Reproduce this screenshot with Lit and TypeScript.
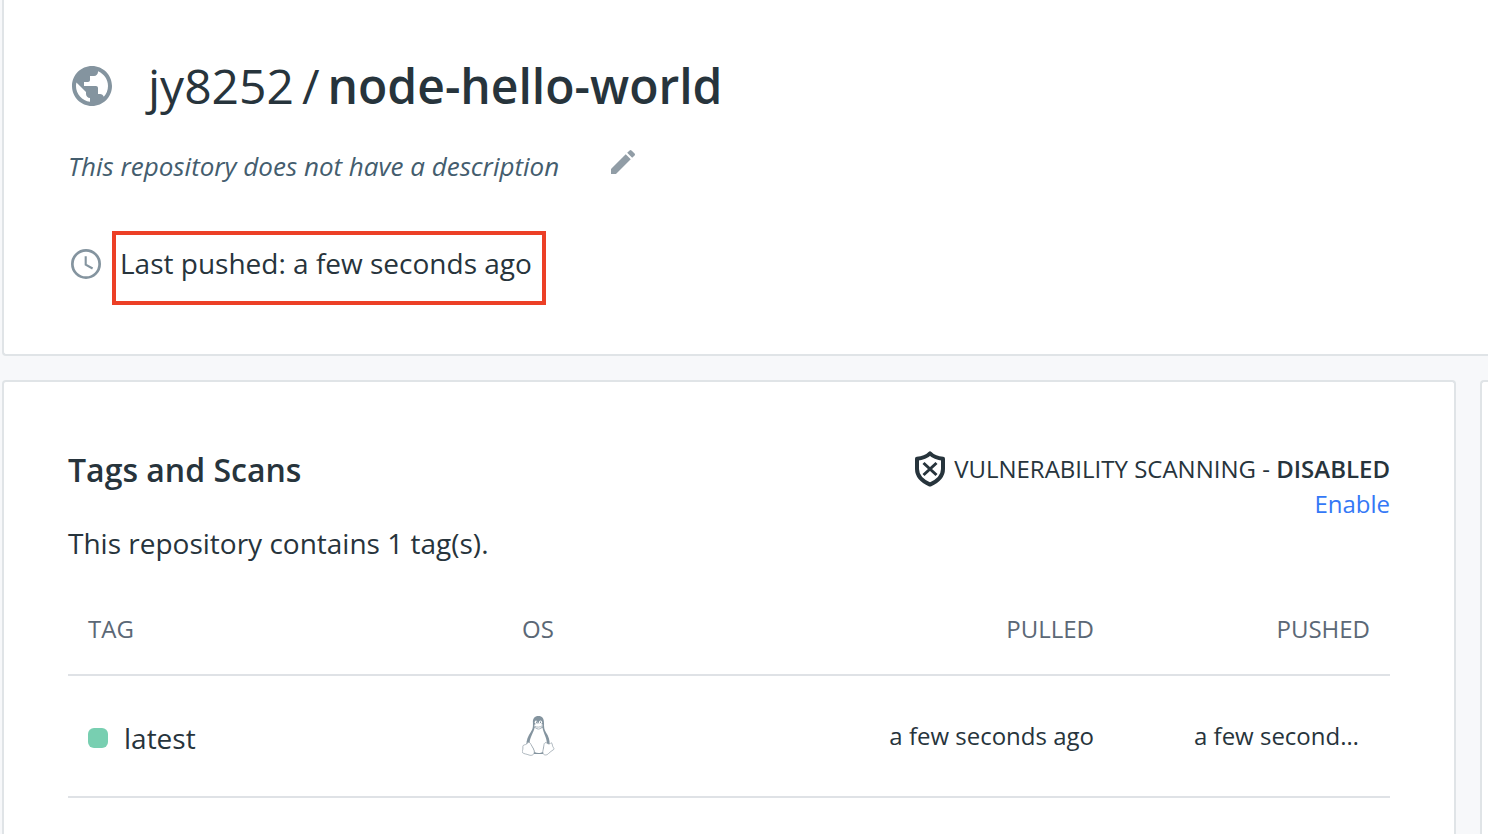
import { LitElement, html, css, svg } from "lit";
import { customElement } from "lit/decorators.js";

interface TagRow {
  name: string;
  pulled: string;
  pushed: string;
}

const rows: TagRow[] = [
  { name: "latest", pulled: "a few seconds ago", pushed: "a few seconds ago" },
];

const globe = svg`<path fill="currentColor" d="M12 2C6.480 2 2 6.480 2 12s4.480 10 10 10 10-4.480 10-10S17.520 2 12 2zm-1 17.930c-3.950-.49-7-3.850-7-7.930 0-.62.08-1.210.21-1.790L9 15v1c0 1.100.9 2 2 2v1.930zm6.900-2.540c-.26-.81-1-1.390-1.900-1.390h-1v-3c0-.55-.45-1-1-1H8v-2h2c.55 0 1-.45 1-1V7h2c1.100 0 2-.9 2-2v-.41c2.930 1.190 5 4.060 5 7.410 0 2.080-.8 3.970-2.100 5.390z"/>`;

const pencil = svg`<path fill="currentColor" d="M3 17.250V21h3.750L17.810 9.940l-3.750-3.750L3 17.250zM20.710 7.040a1 1 0 0 0 0-1.410l-2.340-2.340a1 1 0 0 0-1.410 0l-1.830 1.830 3.750 3.750 1.830-1.830z"/>`;

const clock = svg`<circle cx="12" cy="12" r="9.100" fill="none" stroke="currentColor" stroke-width="1.800"/><path fill="none" stroke="currentColor" stroke-width="1.400" d="M11.800 6.800v5.700l4.600 2.500"/>`;

const shield = svg`<path fill="none" stroke="currentColor" stroke-width="4" stroke-linejoin="round" d="M18 2.400C14.800 5.600 10 7.400 5 7.800V18c0 7.200 5.400 12.200 13 15.600C25.600 30.200 31 25.200 31 18V7.800C26 7.400 21.200 5.600 18 2.400z"/><path fill="none" stroke="currentColor" stroke-width="3" d="M11.500 12l13 12M24.500 12l-13 12"/>`;

const tux = svg`
  <path fill="#84949f" d="M16.500 0C12.600 0 10.700 2.600 10.900 6.200c.2 4.500.1 6.400-2.100 9.800-2.600 4-4.800 8.400-4.300 13.500l6 8.500h11l6-8.500c.7-5-1-9.500-3.500-13-2-2.900-2-5.500-2-9.500C22 2.600 20.200 0 16.500 0z"/>
  <path fill="#fff" d="M12.600 11.500c-.6 4.500-4.800 9.500-5 15.500 1.600 2.500 5 5.500 4.900 9 2.500 1.600 6.500 1.500 8.500-.5 0-3.600.7-6.500 3.700-7.500.8-5.500-3.400-10.500-4.200-16.500-2.500 2.400-5.400 2.400-7.900 0z"/>
  <path fill="#fff" stroke="#9ba7b0" stroke-width=".5" d="M12 9.300c1.400-1.600 3.200-2.300 4.600-2.200 1.600.1 3.500.8 4.200 1.800.2 1.800-2.400 4-4.400 4-1.800 0-4.300-1.900-4.400-3.600z"/>
  <path fill="none" stroke="#9ba7b0" stroke-width=".8" d="M12.500 10c2.500 1.700 5.500 1.500 8-.5"/>
  <ellipse cx="14" cy="6.200" rx="1.300" ry="1.600" fill="#fff"/>
  <ellipse cx="18.500" cy="6.200" rx="1.600" ry="1.700" fill="#fff"/>
  <path fill="#84949f" d="M14 5.600h.9v1.300H14zM18 5.600h1v1.300h-1z"/>
  <path fill="#fff" stroke="#8e9ba5" stroke-width=".7" d="M1.200 29.500c1.300-1.200 3.300-.3 4.300-2.700 1.400-1.500 3 .3 3.800 2.200 1.200 2.500 3 4.400 3 7 0 2.800-2.800 4-5.300 3-2.600-1.100-5-1-6.400-2.300-1-1.100.5-2.900.3-4.700-.1-1.100-.2-1.900.3-2.500z"/>
  <path fill="#fff" stroke="#8e9ba5" stroke-width=".7" d="M22 28.500c.2-1.500 1.500-2.500 2.800-1.500 1.200 1.300 3.200 1.500 4.200-.3 1.400.2 1.200 2.300 1.700 3.600.5 1.400 1.800 2 1 3.200-2 1.700-3.700 2.200-5.200 4-1.500 1.900-4.700 2.100-5.600-.3-.5-2.300.9-5.500 1.100-8.700z"/>
`;

@customElement("app-root")
export class AppRoot extends LitElement {
  static styles = css`
    :host {
      display: block;
      font-family: "Open Sans", "Noto Sans", sans-serif;
      font-size: 28px;
      line-height: 40px;
      color: #27343c;
    }
    * {
      box-sizing: border-box;
    }
    svg {
      display: block;
      flex: none;
    }
    h1,
    h2,
    p {
      margin: 0;
    }
    .page {
      display: flex;
      flex-direction: column;
      gap: 24px;
      height: 100vh;
      padding-left: 2px;
      overflow: hidden;
      background: #f7f8fa;
    }
    .card {
      background: #fff;
      border: 2px solid #e0e4e7;
      border-radius: 4px;
    }
    .header {
      flex: none;
      padding: 52px 64px 49px;
      border-width: 0 0 2px 2px;
      border-radius: 0 0 0 4px;
    }
    .muted {
      color: #84949f;
    }
    .title {
      display: flex;
      align-items: center;
      gap: 32px;
      font-size: 48px;
      line-height: 68px;
      font-weight: 400;
    }
    .name {
      display: flex;
      gap: 8px;
    }
    .name b {
      font-weight: 600;
    }
    .description {
      display: flex;
      align-items: center;
      gap: 48px;
      margin-top: 24px;
      font-size: 26px;
      line-height: 44px;
      font-style: italic;
      color: #445d6e;
    }
    .edit {
      display: block;
      padding: 0 0 8px;
      border: 0;
      background: none;
      color: #919da6;
    }
    .pushed {
      display: flex;
      align-items: center;
      gap: 8px;
      margin-top: 43px;
    }
    .pushed svg {
      margin-bottom: 8px;
    }
    .highlight {
      padding: 8px 10px 18px 4px;
      border: 4px solid #ec3f26;
    }
    .columns {
      flex: 1;
      display: grid;
      grid-template-columns: minmax(0, 1fr) 8px;
      gap: 24px;
    }
    .main {
      padding: 64px;
      border-bottom: 0;
      border-radius: 4px 4px 0 0;
    }
    .side {
      border-width: 2px 0 0 2px;
      border-radius: 4px 0 0 0;
    }
    .top {
      display: flex;
      justify-content: space-between;
      align-items: flex-start;
    }
    .top h2 {
      font-size: 32px;
      line-height: 48px;
      font-weight: 600;
    }
    .scan {
      display: flex;
      flex-direction: column;
      align-items: flex-end;
      padding-top: 5px;
      font-size: 24px;
      line-height: 34px;
    }
    .status {
      display: flex;
      align-items: center;
      gap: 6px;
    }
    .status b {
      font-weight: 600;
    }
    .scan a {
      color: #3478f6;
      text-decoration: none;
    }
    .count {
      margin-top: 2px;
    }
    table {
      width: 100%;
      margin-top: 21px;
      border-collapse: collapse;
      table-layout: fixed;
      font-size: 24px;
    }
    th,
    td {
      padding: 0 20px;
      border-bottom: 2px solid #dfe2e6;
      text-align: left;
    }
    th {
      height: 91px;
      font-weight: 400;
      color: #5b6876;
    }
    td {
      height: 122px;
    }
    .tag-col {
      width: 434px;
    }
    .pushed-col {
      width: 276px;
    }
    .right {
      text-align: right;
    }
    .tag {
      display: flex;
      align-items: center;
      gap: 16px;
      padding-top: 4px;
      font-size: 28px;
    }
    .dot {
      width: 20px;
      height: 20px;
      border-radius: 6px;
      background: #78cfb1;
    }
    .when {
      margin-left: 60px;
      overflow: hidden;
      text-overflow: ellipsis;
      white-space: nowrap;
    }
  `;

  render() {
    return html`
      <div class="page">
        <header class="card header">
          <h1 class="title">
            <svg class="muted" width="48" height="48" viewBox="0 0 24 24" aria-hidden="true">${globe}</svg>
            <span class="name"><span>jy8252</span><span>/</span><b>node-hello-world</b></span>
          </h1>
          <div class="description">
            <p>This repository does not have a description</p>
            <button class="edit" type="button" aria-label="Edit description">
              <svg width="32" height="32" viewBox="0 0 24 24" aria-hidden="true">${pencil}</svg>
            </button>
          </div>
          <div class="pushed">
            <svg class="muted" width="36" height="36" viewBox="0 0 24 24" aria-hidden="true">${clock}</svg>
            <p class="highlight">Last pushed: a few seconds ago</p>
          </div>
        </header>
        <div class="columns">
          <main class="card main">
            <div class="top">
              <h2>Tags and Scans</h2>
              <div class="scan">
                <div class="status">
                  <svg width="36" height="36" viewBox="0 0 36 36" aria-hidden="true">${shield}</svg>
                  <span>VULNERABILITY SCANNING - <b>DISABLED</b></span>
                </div>
                <a href="#enable">Enable</a>
              </div>
            </div>
            <p class="count">This repository contains ${rows.length} tag(s).</p>
            <table>
              <colgroup>
                <col class="tag-col" />
                <col />
                <col />
                <col class="pushed-col" />
              </colgroup>
              <thead>
                <tr>
                  <th scope="col">TAG</th>
                  <th scope="col">OS</th>
                  <th scope="col" class="right">PULLED</th>
                  <th scope="col" class="right">PUSHED</th>
                </tr>
              </thead>
              <tbody>
                ${rows.map(
                  (row) => html`
                    <tr>
                      <td><div class="tag"><span class="dot"></span>${row.name}</div></td>
                      <td><svg width="33" height="41" viewBox="0 0 33 41" role="img" aria-label="Linux">${tux}</svg></td>
                      <td class="right">${row.pulled}</td>
                      <td><div class="when">${row.pushed}</div></td>
                    </tr>
                  `
                )}
              </tbody>
            </table>
          </main>
          <aside class="card side"></aside>
        </div>
      </div>
    `;
  }
}
